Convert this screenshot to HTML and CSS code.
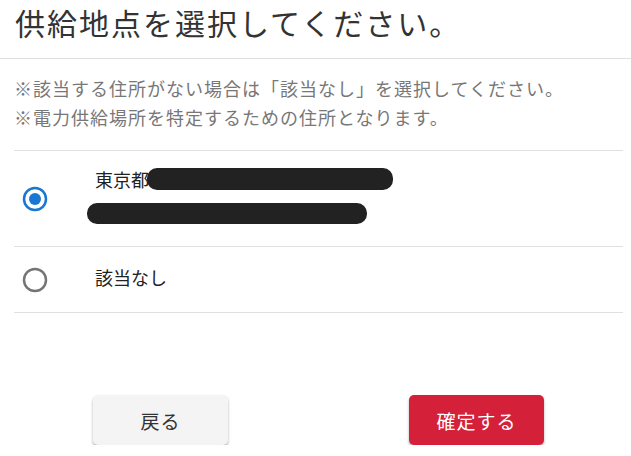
FILE: index.html
```html
<!DOCTYPE html>
<html lang="ja">
<head>
    <meta charset="UTF-8">
    <meta name="viewport" content="width=device-width, initial-scale=1.0">
    <title>供給地点を選択</title>
    <link rel="stylesheet" href="styles.css">
</head>
<body>
    <header class="page-header">
        <h1>供給地点を選択してください。</h1>
    </header>

    <div class="notes">
        <p>※該当する住所がない場合は「該当なし」を選択してください。</p>
        <p>※電力供給場所を特定するための住所となります。</p>
    </div>

    <ul class="choices">
        <li class="choice">
            <span class="radio">
                <svg width="26" height="26" viewBox="0 0 26 26">
                    <circle cx="13" cy="13" r="11" fill="none" stroke="#1976d2" stroke-width="2.5"/>
                    <circle cx="13" cy="13" r="6" fill="#1976d2"/>
                </svg>
            </span>
            <div class="address">
                <div class="line">東京都<span class="redact redact-1"></span></div>
                <div class="line"><span class="redact redact-2"></span></div>
            </div>
        </li>
        <li class="choice choice-none">
            <span class="radio">
                <svg width="26" height="26" viewBox="0 0 26 26">
                    <circle cx="13" cy="13" r="11" fill="none" stroke="#757575" stroke-width="2.5"/>
                </svg>
            </span>
            <div class="address">
                <div class="line">該当なし</div>
            </div>
        </li>
    </ul>

    <div class="actions">
        <button class="btn btn-back">戻る</button>
        <button class="btn btn-ok">確定する</button>
    </div>
</body>
</html>
```

FILE: styles.css
```css
body {
    margin: 0;
    font-family: "Noto Sans CJK JP", "Noto Sans", sans-serif;
    background-color: #ffffff;
    color: #212121;
}
.page-header {
    padding: 0 15px;
    height: 58px;
    border-bottom: 1px solid #e0e0e0;
}
.page-header h1 {
    margin: 0;
    font-size: 30px;
    font-weight: 400;
    line-height: 44px;
    letter-spacing: 2px;
    color: #333333;
}
.notes {
    padding: 15px 14px 0;
}
.notes p {
    margin: 0;
    font-size: 18px;
    line-height: 29px;
    letter-spacing: 1px;
    color: #777777;
}
.choices {
    list-style: none;
    margin: 18px 8px 0 14px;
    padding: 0;
}
.choice {
    display: flex;
    align-items: center;
    border-top: 1px solid #e0e0e0;
    min-height: 95px;
}
.choice:last-child {
    border-bottom: 1px solid #e0e0e0;
}
.choice-none {
    min-height: 65px;
}
.radio {
    display: flex;
    width: 26px;
    height: 26px;
    margin-left: 8px;
    margin-right: 47px;
}
.address {
    font-size: 18px;
    line-height: 32px;
    color: #222222;
}
.address .line {
    height: 32px;
    display: flex;
    align-items: center;
}
.choice:first-child .address {
    margin-top: -7px;
}
.choice-none .address {
    margin-top: -6px;
}
.redact {
    display: inline-block;
    background-color: #222222;
    border-radius: 10px;
}
.redact-1 {
    width: 246px;
    height: 22px;
    margin-left: -2px;
}
.redact-2 {
    width: 280px;
    height: 21px;
    margin-left: -8px;
    margin-top: 4px;
}
.actions {
    display: flex;
    justify-content: center;
    gap: 181px;
    margin: 82px 8px 0 14px;
}
.btn {
    width: 135px;
    height: 50px;
    border: none;
    border-radius: 5px;
    font-family: "Noto Sans CJK JP", "Noto Sans", sans-serif;
    font-size: 19px;
    letter-spacing: 1px;
    box-shadow: 0 2px 3px rgba(0, 0, 0, 0.3);
    cursor: pointer;
}
.btn-back {
    background-color: #f4f4f4;
    color: #333333;
}
.btn-ok {
    background-color: #d42139;
    color: #ffffff;
}
```
